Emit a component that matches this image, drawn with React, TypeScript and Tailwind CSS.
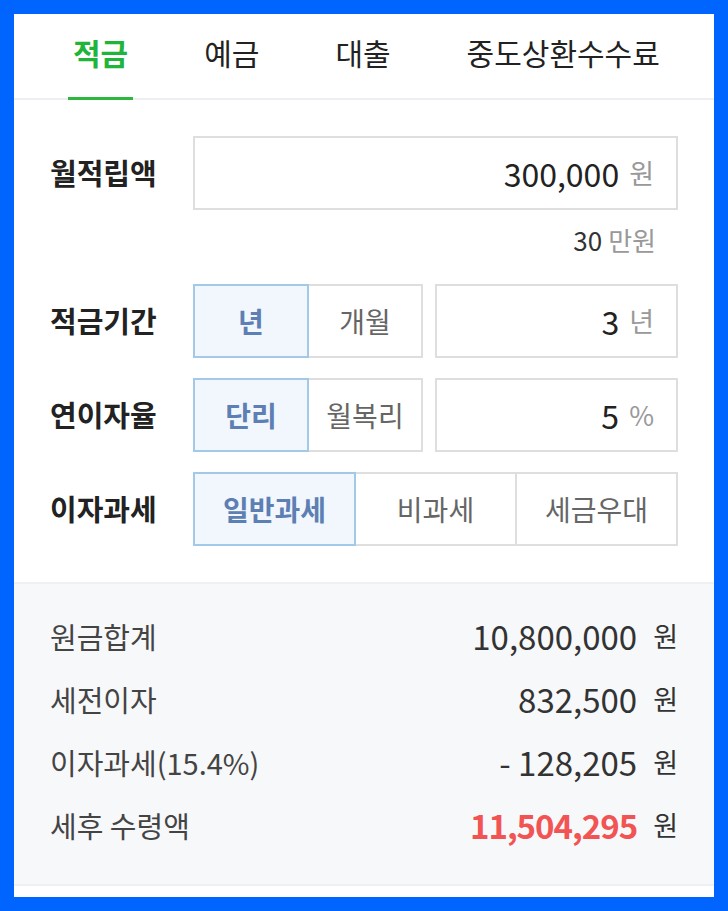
import { useState } from "react";

const font = { fontFamily: '"Noto Sans CJK KR", "Noto Sans", sans-serif' };

const tabs = ["적금", "예금", "대출", "중도상환수수료"];

const results = [
  { label: "원금합계", value: "10,800,000" },
  { label: "세전이자", value: "832,500" },
  { label: "이자과세(15.4%)", value: "- 128,205" },
  { label: "세후 수령액", value: "11,504,295", highlight: true },
];

const Segment = ({
  items,
  active,
  onChange,
}: {
  items: string[];
  active: number;
  onChange: (i: number) => void;
}) => (
  <div className="flex h-full flex-1">
    {items.map((item, i) => (
      <button
        key={item}
        onClick={() => onChange(i)}
        className={
          i === active
            ? "relative z-10 flex-1 border-2 border-[#a3c9e8] bg-[#f2f7fd] text-[28px] font-bold text-[#5d7fb3]"
            : "-ml-[2px] flex-1 border-2 border-[#dedede] bg-white text-[28px] text-[#666] first:ml-0"
        }
      >
        {item}
      </button>
    ))}
  </div>
);

const UnitBox = ({ value, unit }: { value: string; unit: string }) => (
  <div className="flex h-full flex-1 items-center justify-end gap-[10px] border-2 border-[#dedede] pr-[22px]">
    <span className="text-[32px] text-[#222]">{value}</span>
    <span className="text-[27px] text-[#999]">{unit}</span>
  </div>
);

const App = () => {
  const [tab, setTab] = useState(0);
  const [period, setPeriod] = useState(0);
  const [rate, setRate] = useState(0);
  const [tax, setTax] = useState(0);

  return (
    <div className="h-[911px] w-[728px] bg-[#0064ff] p-[14px]" style={font}>
      <div className="flex h-full flex-col bg-white">
        {/* tabs */}
        <div className="flex h-[86px] shrink-0 gap-[66px] border-b-2 border-[#eceef1] pl-[54px]">
          {tabs.map((t, i) => (
            <button
              key={t}
              onClick={() => setTab(i)}
              className={
                i === tab
                  ? "-mb-[2px] flex shrink-0 items-center whitespace-nowrap border-b-[3px] border-[#2db83d] px-[5px] pb-[6px] text-[30px] font-bold text-[#1fb53a]"
                  : "-mb-[2px] flex shrink-0 items-center whitespace-nowrap border-b-[3px] border-transparent px-[5px] pb-[6px] text-[30px] text-[#222]"
              }
            >
              {t}
            </button>
          ))}
        </div>

        {/* form */}
        <div className="flex flex-col px-[36px] pt-[36px] pb-[36px]">
          <div className="flex h-[74px] items-center">
            <span className="w-[143px] text-[29px] font-bold text-[#222]">월적립액</span>
            <UnitBox value="300,000" unit="원" />
          </div>
          <div className="mt-[14px] mb-[30px] flex h-[30px] items-center justify-end gap-[6px] pr-[22px]">
            <span className="text-[26px] text-[#333]">30</span>
            <span className="text-[26px] text-[#999]">만원</span>
          </div>

          <div className="flex h-[74px] items-center">
            <span className="w-[143px] text-[29px] font-bold text-[#222]">적금기간</span>
            <div className="flex h-full flex-1 gap-[12px]">
              <div className="flex w-[230px]">
                <Segment items={["년", "개월"]} active={period} onChange={setPeriod} />
              </div>
              <UnitBox value="3" unit="년" />
            </div>
          </div>

          <div className="mt-[20px] flex h-[74px] items-center">
            <span className="w-[143px] text-[29px] font-bold text-[#222]">연이자율</span>
            <div className="flex h-full flex-1 gap-[12px]">
              <div className="flex w-[230px]">
                <Segment items={["단리", "월복리"]} active={rate} onChange={setRate} />
              </div>
              <UnitBox value="5" unit="%" />
            </div>
          </div>

          <div className="mt-[20px] flex h-[74px] items-center">
            <span className="w-[143px] text-[29px] font-bold text-[#222]">이자과세</span>
            <Segment items={["일반과세", "비과세", "세금우대"]} active={tax} onChange={setTax} />
          </div>
        </div>

        {/* results */}
        <div className="flex flex-col border-y-2 border-[#eef0f2] bg-[#f7f8fa] px-[36px] pt-[21px] pb-[27px]">
          {results.map((r) => (
            <div key={r.label} className="flex h-[63px] items-center justify-between">
              <span className="text-[29px] text-[#444]">{r.label}</span>
              <div className="flex items-center gap-[16px]">
                <span
                  className={
                    r.highlight
                      ? "text-[33px] font-bold tracking-[-1px] text-[#f25454]"
                      : "text-[33px] text-[#333]"
                  }
                >
                  {r.value}
                </span>
                <span className="text-[27px] text-[#333]">원</span>
              </div>
            </div>
          ))}
        </div>
      </div>
    </div>
  );
};

export default App;
